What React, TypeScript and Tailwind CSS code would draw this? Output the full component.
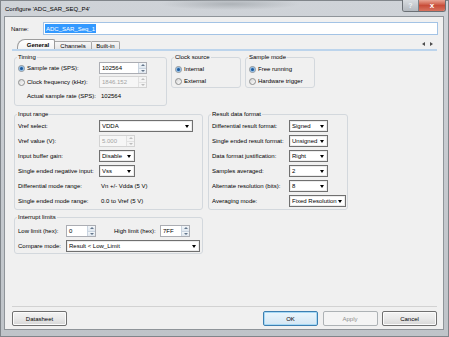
import type { ReactNode } from 'react'

function Radio({ checked = false }: { checked?: boolean }) {
  return (
    <span className="flex h-[7px] w-[7px] shrink-0 items-center justify-center rounded-full border border-[#8e8f8f] bg-gradient-to-br from-[#d6d6d6] to-[#fbfbfb]">
      {checked && <span className="h-[3px] w-[3px] rounded-full bg-[#1d5a9c] shadow-[0_0_1px_1px_#7fb2e3]" />}
    </span>
  )
}

function RadioRow({ label, checked = false }: { label: string; checked?: boolean }) {
  return (
    <div className="flex h-[12px] items-center">
      <Radio checked={checked} />
      <span className="ml-[2px] whitespace-nowrap">{label}</span>
    </div>
  )
}

function Spin({ value, w, disabled = false }: { value: string; w: string; disabled?: boolean }) {
  const btn = disabled ? 'border-[#e1e1e1] bg-[#f4f4f4]' : 'border-[#c9d4e0] bg-gradient-to-b from-[#f3f6f9] to-[#dfe7ef]'
  const arrow = disabled ? '#bdbdbd' : '#64778c'
  return (
    <div
      className={`flex h-[12px] shrink-0 ${w} border ${
        disabled ? 'border-[#d3d3d3] bg-[#f6f6f6] text-[#a4a4a4]' : 'border-[#abadb3] bg-white text-[#000]'
      }`}
    >
      <span className="flex-1 whitespace-nowrap pl-[2px] leading-[10px]">{value}</span>
      <div className="flex w-[8px] flex-col">
        <span className={`flex flex-1 items-center justify-center border-b border-l ${btn}`}>
          <span className="h-0 w-0 border-x-[2px] border-b-[2px] border-x-transparent" style={{ borderBottomColor: arrow }} />
        </span>
        <span className={`flex flex-1 items-center justify-center border-l ${btn}`}>
          <span className="h-0 w-0 border-x-[2px] border-t-[2px] border-x-transparent" style={{ borderTopColor: arrow }} />
        </span>
      </div>
    </div>
  )
}

function Combo({ value, w }: { value: string; w: string }) {
  return (
    <div
      className={`flex h-[12px] shrink-0 ${w} items-center justify-between border border-[#707070] bg-white pl-[2px] pr-[3px] shadow-[inset_0_0_0_1px_#ececec]`}
    >
      <span className="whitespace-nowrap leading-[10px]">{value}</span>
      <span className="h-0 w-0 border-x-[2.5px] border-t-[3px] border-x-transparent border-t-[#000]" />
    </div>
  )
}

function Group({ title, className, children }: { title: string; className: string; children: ReactNode }) {
  return (
    <fieldset className={`shrink-0 rounded-[3px] border border-[#d3d8dd] pl-[3px] ${className}`}>
      <legend className="-ml-px px-px leading-[8px]">{title}</legend>
      {children}
    </fieldset>
  )
}

function Btn({ children, kind = 'normal' }: { children: ReactNode; kind?: 'normal' | 'default' | 'disabled' }) {
  const look =
    kind === 'default'
      ? 'border-[#3c7fb1] bg-gradient-to-b from-[#eaf6fd] to-[#d4e6f3] shadow-[inset_0_0_0_1px_#a7d9f5]'
      : kind === 'disabled'
        ? 'border-[#adb2b5] bg-[#f4f4f4] text-[#8d8d8d]'
        : 'border-[#707070] bg-gradient-to-b from-[#f3f3f3] via-[#e9e9e9] to-[#d7d7d7] shadow-[inset_0_0_0_1px_#fbfbfb]'
  return (
    <div className={`flex h-[15px] w-[55px] shrink-0 items-center justify-center rounded-[2px] border ${look}`}>{children}</div>
  )
}

export default function App() {
  return (
    <div className="flex h-[337px] w-[449px] flex-col overflow-hidden bg-gradient-to-b from-[#cfd3d8] via-[#c6cacf] to-[#bfc4c9] font-['Liberation_Sans',Arial,sans-serif] text-[6px] leading-[8px] text-[#000] shadow-[inset_0_0_0_1px_#80858a]">
      {/* title bar */}
      <div className="flex h-[16px] shrink-0 items-start justify-between bg-[radial-gradient(ellipse_70px_6px_at_230px_4px,#aeb3b8,transparent)] pl-[5px] pr-[3px]">
        <span className="mt-[5px] whitespace-nowrap text-[#000]">Configure 'ADC_SAR_SEQ_P4'</span>
        <div className="flex h-[12px] overflow-hidden rounded-b-[3px] border border-t-0 border-[#6b7075]">
          <span className="flex w-[16px] items-center justify-center border-r border-[#7d8287] bg-gradient-to-b from-[#d8dce0] to-[#b4b9bf] text-[7px] font-bold leading-none text-[#eef1f4]">
            ?
          </span>
          <span className="flex w-[26px] items-center justify-center bg-gradient-to-b from-[#e8a595] via-[#c84d39] to-[#d8735f] text-[8px] font-bold leading-none text-white">
            x
          </span>
        </div>
      </div>

      {/* client area */}
      <div className="ml-[4px] mr-[5px] flex h-[314px] shrink-0 flex-col border border-[#8f9499] bg-[#f0f0f0] pb-[3px] pt-[5px]">
        {/* name */}
        <div className="flex h-[13px] items-center pl-[6px] pr-[5px]">
          <span className="w-[32px]">Name:</span>
          <div className="flex h-[13px] flex-1 items-stretch border border-[#a3c3e5] bg-white p-[1px]">
            <span className="flex items-center bg-[#3399ff] px-[1px] text-white">ADC_SAR_Seq_1</span>
          </div>
        </div>

        {/* tabs */}
        <div className="ml-[7px] mr-[6px] mt-[4px] flex h-[12px] items-end border-b-2 border-[#bcd4ec] pl-[5px]">
          <div className="flex h-[10px] w-[38px] items-center justify-center rounded-tl-[8px] rounded-tr-[2px] border border-b-0 border-[#9c9c9c] bg-gradient-to-b from-white to-[#f4f4f4] pl-[4px] font-bold">
            General
          </div>
          <div className="flex h-[8px] w-[37px] items-center justify-center rounded-tr-[2px] border border-b-0 border-l-0 border-[#a8a8a8] bg-gradient-to-b from-[#f7f7f7] to-[#e6e6e6]">
            Channels
          </div>
          <div className="flex h-[8px] w-[28px] items-center justify-center rounded-tr-[2px] border border-b-0 border-l-0 border-[#a8a8a8] bg-gradient-to-b from-[#f7f7f7] to-[#e6e6e6]">
            Built-in
          </div>
          <div className="ml-auto flex h-[10px] items-center gap-[5px] pr-[4px]">
            <span className="h-0 w-0 border-y-[2px] border-r-[3px] border-y-transparent border-r-[#4d4d4d]" />
            <span className="h-0 w-0 border-y-[2px] border-l-[3px] border-y-transparent border-l-[#4d4d4d]" />
          </div>
        </div>

        {/* tab page */}
        <div className="ml-[9px] mt-[2px] flex flex-col">
          <div className="flex items-start gap-[4px]">
            <Group title="Timing" className="w-[153px] pb-[3px]">
              <div className="mt-[1px] flex flex-col gap-[2px]">
                <div className="flex h-[12px] items-center">
                  <Radio checked />
                  <span className="ml-[2px] w-[72px] whitespace-nowrap">Sample rate (SPS):</span>
                  <Spin value="102564" w="w-[48px]" />
                </div>
                <div className="flex h-[12px] items-center">
                  <Radio />
                  <span className="ml-[2px] w-[72px] whitespace-nowrap">Clock frequency (kHz):</span>
                  <Spin value="1846.152" w="w-[48px]" disabled />
                </div>
                <div className="flex h-[12px] items-center pl-[9px]">
                  <span className="w-[72px] whitespace-nowrap">Actual sample rate (SPS):</span>
                  <span className="pl-[2px]">102564</span>
                </div>
              </div>
            </Group>
            <Group title="Clock source" className="w-[70px]">
              <div className="mt-[2px] flex flex-col">
                <RadioRow checked label="Internal" />
                <RadioRow label="External" />
              </div>
            </Group>
            <Group title="Sample mode" className="w-[70px]">
              <div className="mt-[2px] flex flex-col">
                <RadioRow checked label="Free running" />
                <RadioRow label="Hardware trigger" />
              </div>
            </Group>
          </div>

          <div className="mt-[4px] flex items-start gap-[5px]">
            <Group title="Input range" className="w-[189px] pb-[2px]">
              <div className="mt-[2px] grid auto-rows-[12px] grid-cols-[81px_auto] items-center justify-items-start gap-y-[3px] whitespace-nowrap">
                <span>Vref select:</span>
                <Combo value="VDDA" w="w-[94px]" />
                <span>Vref value (V):</span>
                <Spin value="5.000" w="w-[36px]" disabled />
                <span>Input buffer gain:</span>
                <Combo value="Disable" w="w-[36px]" />
                <span>Single ended negative input:</span>
                <Combo value="Vss" w="w-[36px]" />
                <span>Differential mode range:</span>
                <span className="pl-[2px]">Vn +/- Vdda (5 V)</span>
                <span>Single ended mode range:</span>
                <span className="pl-[2px]">0.0 to Vref (5 V)</span>
              </div>
            </Group>
            <Group title="Result data format" className="w-[140px] pb-[2px]">
              <div className="mt-[2px] grid auto-rows-[12px] grid-cols-[77px_auto] items-center justify-items-start gap-y-[3px] whitespace-nowrap">
                <span>Differential result format:</span>
                <Combo value="Signed" w="w-[39px]" />
                <span>Single ended result format:</span>
                <Combo value="Unsigned" w="w-[39px]" />
                <span>Data format justification:</span>
                <Combo value="Right" w="w-[39px]" />
                <span>Samples averaged:</span>
                <Combo value="2" w="w-[39px]" />
                <span>Alternate resolution (bits):</span>
                <Combo value="8" w="w-[39px]" />
                <span>Averaging mode:</span>
                <Combo value="Fixed Resolution" w="w-[57px]" />
              </div>
            </Group>
          </div>

          <div className="mt-[3px] flex">
            <Group title="Interrupt limits" className="w-[189px] pb-[1px]">
              <div className="mt-[4px] flex flex-col gap-[3px] whitespace-nowrap">
                <div className="flex h-[12px] items-center">
                  <span className="w-[48px]">Low limit (hex):</span>
                  <Spin value="0" w="w-[30px]" />
                  <span className="ml-[18px] w-[46px]">High limit (hex):</span>
                  <Spin value="7FF" w="w-[30px]" />
                </div>
                <div className="flex h-[12px] items-center">
                  <span className="w-[48px]">Compare mode:</span>
                  <Combo value="Result < Low_Limit" w="w-[134px]" />
                </div>
              </div>
            </Group>
          </div>
        </div>

        <div className="flex-1" />

        <div className="ml-[7px] mr-[6px] h-px bg-[#d2d2d2]" />
        <div className="ml-[7px] mr-[6px] mt-[4px] flex h-[15px] items-center">
          <Btn>Datasheet</Btn>
          <div className="ml-auto flex gap-[4.5px]">
            <Btn kind="default">OK</Btn>
            <Btn kind="disabled">Apply</Btn>
            <Btn>Cancel</Btn>
          </div>
        </div>
      </div>
    </div>
  )
}
